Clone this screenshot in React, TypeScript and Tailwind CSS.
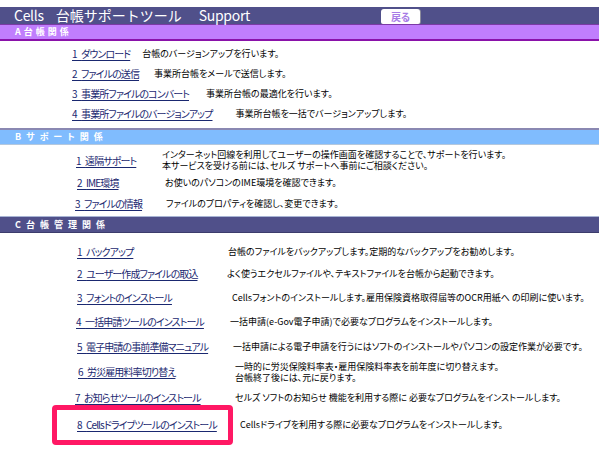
import React from 'react'

type Row = {
  num: string
  label: string
  desc: string[]
  rowClass: string
  linkClass: string
  descClass: string
}

const sectionA: Row[] = [
  { num: '1', label: 'ダウンロード', desc: ['台帳のバージョンアップを行います。'], rowClass: 'h-[20px]', linkClass: '', descClass: 'ml-[12px]' },
  { num: '2', label: 'ファイルの送信', desc: ['事業所台帳をメールで送信します。'], rowClass: 'h-[20px]', linkClass: '', descClass: 'ml-[15px]' },
  { num: '3', label: '事業所ファイルのコンバート', desc: ['事業所台帳の最適化を行います。'], rowClass: 'h-[20px]', linkClass: '', descClass: 'ml-[17px]' },
  { num: '4', label: '事業所ファイルのバージョンアップ', desc: ['事業所台帳を一括でバージョンアップします。'], rowClass: 'h-[20px]', linkClass: '', descClass: 'ml-[23px]' },
]

const sectionB: Row[] = [
  {
    num: '1',
    label: '遠隔サポート',
    desc: [
      'インターネット回線を利用してユーザーの操作画面を確認することで、サポートを行います。',
      '本サービスを受ける前には、セルズ サポートへ事前にご相談ください。',
    ],
    rowClass: 'h-[22px]',
    linkClass: 'pl-[76px]',
    descClass: 'pl-[162px]',
  },
  { num: '2', label: 'IME環境', desc: ['お使いのパソコンのIME環境を確認できます。'], rowClass: 'h-[22px]', linkClass: 'pl-[77px]', descClass: 'pl-[165px]' },
  { num: '3', label: 'ファイルの情報', desc: ['ファイルのプロパティを確認し、変更できます。'], rowClass: 'h-[20px]', linkClass: 'pl-[75px]', descClass: 'pl-[166px]' },
]

const sectionC: Row[] = [
  { num: '1', label: 'バックアップ', desc: ['台帳のファイルをバックアップします。定期的なバックアップをお勧めします。'], rowClass: 'h-[22px]', linkClass: 'pl-[77px]', descClass: 'pl-[228px]' },
  { num: '2', label: 'ユーザー作成ファイルの取込', desc: ['よく使うエクセルファイルや、テキストファイルを台帳から起動できます。'], rowClass: 'h-[23px]', linkClass: 'pl-[77px]', descClass: 'pl-[227px]' },
  { num: '3', label: 'フォントのインストール', desc: ['Cellsフォントのインストールします。雇用保険資格取得届等のOCR用紙へ の印刷に使います。'], rowClass: 'h-[24px]', linkClass: 'pl-[77px]', descClass: 'pl-[232px]' },
  { num: '4', label: '一括申請ツールのインストール', desc: ['一括申請(e-Gov電子申請)で必要なプログラムをインストールします。'], rowClass: 'h-[25px]', linkClass: 'pl-[76px]', descClass: 'pl-[230px]' },
  { num: '5', label: '電子申請の事前準備マニュアル', desc: ['一括申請による電子申請を行うにはソフトのインストールやパソコンの設定作業が必要です。'], rowClass: 'h-[25px]', linkClass: 'pl-[77px]', descClass: 'pl-[233px]' },
  {
    num: '6',
    label: '労災雇用料率切り替え',
    desc: ['一時的に労災保険料率表・雇用保険料率表を前年度に切り替えます。', '台帳終了後には、元に戻ります。'],
    rowClass: 'h-[25px]',
    linkClass: 'pl-[78px]',
    descClass: 'pl-[235px]',
  },
  { num: '7', label: 'お知らせツールのインストール', desc: ['セルズ ソフトのお知らせ 機能を利用する際に 必要なプログラムをインストールします。'], rowClass: 'h-[27px]', linkClass: 'pl-[75px]', descClass: 'pl-[235px]' },
  { num: '8', label: 'Cellsドライブツールのインストール', desc: ['Cellsドライブを利用する際に必要なプログラムをインストールします。'], rowClass: 'h-[27px]', linkClass: 'pl-[77px]', descClass: 'pl-[240px]' },
]

const descStyle = 'text-[9px] leading-[11px] text-black whitespace-nowrap'

function LinkText({ row }: { row: Row }) {
  return (
    <a className="text-[10px] leading-[13px] text-[#1a2870] underline underline-offset-2 whitespace-nowrap">
      <span className="tracking-[3.5px]">{row.num}</span>
      <span className="tracking-[-0.9px]">{row.label}</span>
    </a>
  )
}

function Desc({ lines }: { lines: string[] }) {
  return (
    <div className="flex flex-col">
      {lines.map((l) => (
        <span key={l} className={descStyle}>
          {l}
        </span>
      ))}
    </div>
  )
}

// table style rows: link column fixed, description column starting at fixed x
function TableRow({ row, highlight }: { row: Row; highlight?: boolean }) {
  return (
    <div className={`relative flex items-center ${row.rowClass}`}>
      <div className={`absolute left-0 top-0 h-full flex items-center ${row.linkClass}`}>
        <LinkText row={row} />
      </div>
      <div className={row.descClass}>
        <Desc lines={row.desc} />
      </div>
      {highlight && (
        <div className="absolute left-[52px] top-[-6px] w-[181px] h-[40px] border-[5px] border-[#ff1864] rounded-[4px] pointer-events-none" />
      )}
    </div>
  )
}

export default function App() {
  return (
    <div
      className="w-[599px] h-[461px] bg-white overflow-hidden pt-[7px] [font-feature-settings:'palt']"
      style={{ fontFamily: '"Noto Sans CJK JP", "Noto Sans", sans-serif' }}
    >
      {/* title bar */}
      <div className="h-[17px] bg-[#50508a] flex items-stretch">
        <div className="flex items-center pl-[14px] text-white text-[14px] leading-[17px] whitespace-nowrap [font-feature-settings:normal]">
          <span className="tracking-[-0.3px]">Cells</span>
          <span className="ml-[12px]">台帳サポートツール</span>
          <span className="ml-[17px] tracking-[-0.3px]">Support</span>
        </div>
        <div className="ml-auto mr-[179px] mt-[2px] w-[39px] bg-white rounded-t-[3px] rounded-b-[2px] shadow-[1px_0_0_#8c8c9c] flex items-center justify-center">
          <span className="text-[10px] leading-[12px] font-bold text-[#a77ce6]">戻る</span>
        </div>
      </div>

      {/* A */}
      <div className="h-[17px] bg-[#c07efd] border-t border-b-2 border-t-[#7b3aa6] border-b-[#8a12aa] flex items-center pl-[15px]">
        <span className="text-white text-[9px] leading-[10px] font-bold tracking-[3px]">A台帳関係</span>
      </div>
      <div className="pt-[2px] pb-[5px] pl-[72px]">
        {sectionA.map((r) => (
          <div key={r.label} className={`flex items-center ${r.rowClass}`}>
            <LinkText row={r} />
            <div className={r.descClass}>
              <Desc lines={r.desc} />
            </div>
          </div>
        ))}
      </div>

      {/* B */}
      <div className="h-[17px] bg-[#80bcfe] border-t-2 border-b border-t-[#8a88b2] border-b-[#b4c8de] flex items-center pl-[15px]">
        <span className="text-white text-[9px] leading-[10px] font-bold tracking-[5px]">Bサポート関係</span>
      </div>
      <div className="pt-[4px] pb-[3px]">
        {sectionB.map((r) => (
          <TableRow key={r.label} row={r} />
        ))}
      </div>

      {/* C */}
      <div className="h-[17px] bg-[#50508a] border-t border-b border-t-[#a8b4d4] border-b-[#3c3c6c] flex items-center pl-[15px]">
        <span className="text-white text-[9px] leading-[10px] font-bold tracking-[5px]">C台帳管理関係</span>
      </div>
      <div className="pt-[7px]">
        {sectionC.map((r, i) => (
          <TableRow key={r.label} row={r} highlight={i === sectionC.length - 1} />
        ))}
      </div>
    </div>
  )
}
